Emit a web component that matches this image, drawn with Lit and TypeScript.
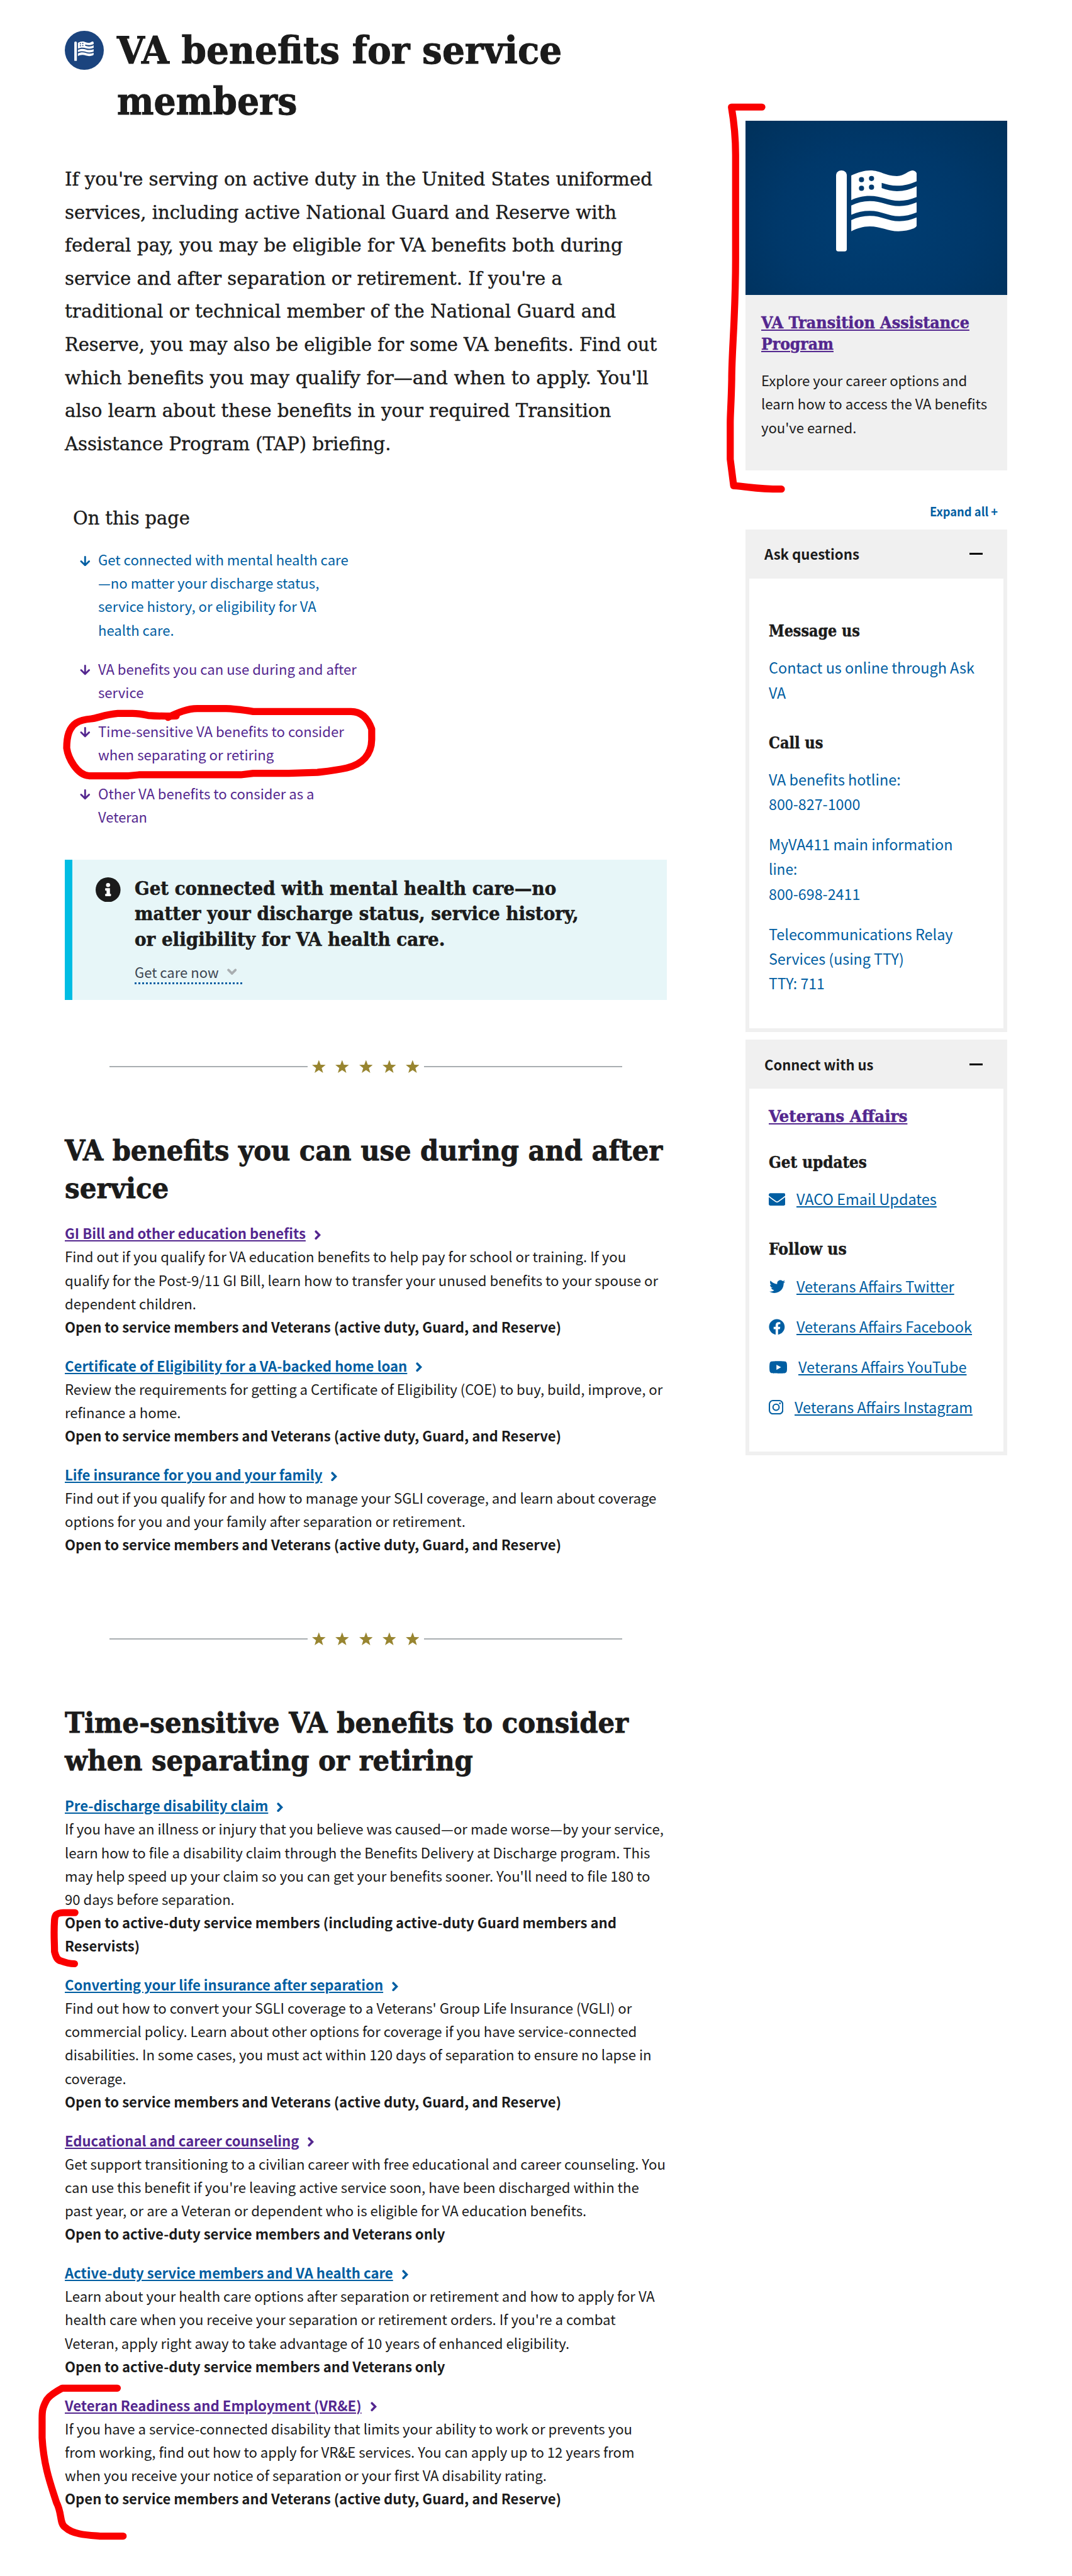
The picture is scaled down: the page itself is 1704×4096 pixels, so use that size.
import { LitElement, html, svg, unsafeCSS } from "lit";
import { customElement, property } from "lit/decorators.js";

/* Lengths are written in design units ("u") and scaled to the page width. */
const SCALE = 1704 / 1101;
const sheet = (source: string) =>
  unsafeCSS(source.replace(/(-?\d*\.?\d+)u\b/g, (_, n) => `${(parseFloat(n) * SCALE).toFixed(3)}px`));

type Line = [text: string, width: number];

/** One line of text set to an exact measure. */
@customElement("fit-line")
class FitLine extends LitElement {
  @property() text = "";
  @property({ type: Number }) measure = 0;

  static styles = sheet(`
    :host { display: block; white-space: nowrap; }
    .ink { display: inline-block; transform-origin: 0 50%; text-decoration: inherit; }
    :host(.link) .ink { text-decoration: underline; text-decoration-thickness: 1.4u; text-underline-offset: 1.3u; }
  `);

  updated() {
    const ink = this.renderRoot.querySelector(".ink") as HTMLElement;
    ink.style.transform = "none";
    const natural = ink.getBoundingClientRect().width;
    const target = this.measure * SCALE;
    this.style.width = `${target}px`;
    if (natural > 0) ink.style.transform = `scaleX(${target / natural})`;
  }

  render() {
    return html`<span class="ink">${this.text}</span>`;
  }
}

const lines = (items: Line[], cls = "") =>
  items.map(([t, w]) => html`<fit-line class=${cls} .text=${t} .measure=${w}></fit-line>`);

const flag = html`<svg class="flag" viewBox="0 0 166 167" fill="#fff">
  <path d="M0 10.5C0 4 5 0 11 0s11 4 11 10.500V162q0 4.500-4.500 4.500h-13Q0 166.500 0 162z" />
  <path fill-rule="evenodd" d="M31.200 10.500C45 4 58 0 70 0c22 0 30 11.500 55 11.500C141 11.500 148 0 157 0q9 1 9 10v12c-13 6-26 9.500-41 9.500-11 0-21-2.500-31.300-6v10.700c10.300 3.800 20.300 6.300 31.300 6.300 15 0 28-4 41-10.300v22.300c-12 5-24 8-36 8-24 0-36-10-61-10-14 0-26 3-37.800 8.500z
    M57.500 19a5.300 5.300 0 1 0-10.600 0 5.300 5.300 0 1 0 10.600 0zM78.100 16.600a5.300 5.300 0 1 0-10.600 0 5.300 5.300 0 1 0 10.600 0zM57.500 36.700a5.300 5.300 0 1 0-10.600 0 5.300 5.300 0 1 0 10.600 0zM78.100 34.400a5.300 5.300 0 1 0-10.600 0 5.300 5.300 0 1 0 10.600 0z" />
  <path d="M31.200 72C43 66 56 63 69 63c25 0 37 10.500 61 10.500 12 0 24-3 36-8V86c-12 5-24 8-36 8-24 0-36-11-61-11-13 0-26 2.500-37.800 8z" />
  <path d="M31.200 102C43 96.500 56 93.500 69 93.500c25 0 37 11 61 11 12 0 24-3 36-8V111q0 5-6 8c-10 4-20 6-32 6-22 0-36-10-59-10-14 0-26 4-37.800 10z" />
</svg>`;

const arrow = html`<svg class="arrow" viewBox="0 0 11 11" fill="none" stroke="currentColor" stroke-width="1.900" stroke-linecap="round" stroke-linejoin="round"><path d="M5.500 1v8.700M1.300 5.600l4.200 4.200 4.200-4.200" /></svg>`;
const chevron = html`<svg class="chevron" viewBox="0 0 13 20" fill="none" stroke="currentColor" stroke-width="4.600" stroke-linecap="round" stroke-linejoin="miter"><path d="M2.800 2.800l7 7.200-7 7.200" /></svg>`;

const icons: Record<string, unknown> = {
  email: html`<svg class="i-email" viewBox="0 0 512 384"><path fill="currentColor" d="M502.300 126.800c3.900-3.100 9.700-.200 9.700 4.700V336c0 26.500-21.500 48-48 48H48c-26.500 0-48-21.500-48-48V131.600c0-5 5.700-7.800 9.700-4.700 22.400 17.400 52.100 39.500 154.100 113.600 21.100 15.400 56.700 47.800 92.200 47.600 35.700.300 72-32.800 92.300-47.600 102-74.100 131.600-96.300 154-113.700zM256 256c23.200.400 56.600-29.200 73.400-41.400 132.700-96.300 142.800-104.700 173.400-128.700 5.800-4.500 9.200-11.500 9.200-18.900V48c0-26.500-21.500-48-48-48H48C21.500 0 0 21.500 0 48v19c0 7.400 3.400 14.300 9.200 18.900 30.600 23.900 40.700 32.400 173.400 128.700 16.800 12.200 50.200 41.800 73.400 41.400z" /></svg>`,
  twitter: html`<svg class="i-twitter" viewBox="0 48 512 416"><path fill="currentColor" d="M459.370 151.716c.325 4.548.325 9.097.325 13.645 0 138.720-105.583 298.558-298.558 298.558-59.452 0-114.680-17.219-161.137-47.106 8.447.974 16.568 1.299 25.340 1.299 49.055 0 94.213-16.568 130.274-44.832-46.132-.975-84.792-31.188-98.112-72.772 6.498.974 12.995 1.624 19.818 1.624 9.421 0 18.843-1.300 27.614-3.573-48.081-9.747-84.143-51.980-84.143-102.985v-1.299c13.969 7.797 30.214 12.670 47.431 13.319-28.264-18.843-46.781-51.005-46.781-87.391 0-19.492 5.197-37.360 14.294-52.954 51.655 63.675 129.300 105.258 216.365 109.807-1.624-7.797-2.599-15.918-2.599-24.040 0-57.828 46.782-104.934 104.934-104.934 30.213 0 57.502 12.670 76.670 33.137 23.715-4.548 46.456-13.320 66.599-25.340-7.798 24.366-24.366 44.833-46.132 57.827 21.117-2.273 41.584-8.122 60.426-16.243-14.292 20.791-32.161 39.308-52.628 54.253z" /></svg>`,
  facebook: html`<svg class="i-facebook" viewBox="0 0 512 512"><path fill="currentColor" d="M504 256C504 119 393 8 256 8S8 119 8 256c0 123.780 90.690 226.380 209.250 245V327.690h-63V256h63v-54.640c0-62.150 37-96.480 93.670-96.480 27.140 0 55.520 4.840 55.520 4.840v61h-31.280c-30.800 0-40.410 19.120-40.410 38.730V256h68.780l-11 71.690h-57.780V501C413.310 482.380 504 379.780 504 256z" /></svg>`,
  youtube: html`<svg class="i-youtube" viewBox="14 64 548 384"><path fill="currentColor" d="M549.655 124.083c-6.281-23.650-24.787-42.276-48.284-48.597C458.781 64 288 64 288 64S117.220 64 74.629 75.486c-23.497 6.322-42.003 24.947-48.284 48.597-11.412 42.867-11.412 132.305-11.412 132.305s0 89.438 11.412 132.305c6.281 23.650 24.787 41.500 48.284 47.821C117.220 448 288 448 288 448s170.780 0 213.371-11.486c23.497-6.321 42.003-24.171 48.284-47.821 11.412-42.867 11.412-132.305 11.412-132.305s0-89.438-11.412-132.305zm-317.510 213.508V175.185l142.739 81.205-142.739 81.201z" /></svg>`,
  instagram: html`<svg class="i-instagram" viewBox="0 0 30 30" fill="none" stroke="currentColor"><rect x="1.350" y="1.350" width="27.300" height="27.300" rx="7.200" stroke-width="2.700" /><circle cx="15" cy="15" r="6.300" stroke-width="2.700" /><circle cx="23" cy="7" r="1.800" fill="currentColor" stroke="none" /></svg>`,
};

const intro: Line[] = [
  ["If you're serving on active duty in the United States uniformed", 603.5],
  ["services, including active National Guard and Reserve with", 566.6],
  ["federal pay, you may be eligible for VA benefits both during", 573],
  ["service and after separation or retirement. If you're a", 511],
  ["traditional or technical member of the National Guard and", 566],
  ["Reserve, you may also be eligible for some VA benefits. Find out", 608],
  ["which benefits you may qualify for—and when to apply. You'll", 599.5],
  ["also learn about these benefits in your required Transition", 561],
  ["Assistance Program (TAP) briefing.", 335],
];

const contents: { visited: boolean; lines: Line[] }[] = [
  {
    visited: false,
    lines: [
      ["Get connected with mental health care", 257],
      ["—no matter your discharge status,", 227],
      ["service history, or eligibility for VA", 224],
      ["health care.", 78],
    ],
  },
  { visited: true, lines: [["VA benefits you can use during and after", 265.5], ["service", 46.8]] },
  { visited: true, lines: [["Time-sensitive VA benefits to consider", 252.5], ["when separating or retiring", 180.5]] },
  { visited: true, lines: [["Other VA benefits to consider as a", 222], ["Veteran", 50.4]] },
];

interface Benefit {
  title: Line;
  visited?: boolean;
  text: Line[];
  open: Line[];
}

const everyone: Line[] = [["Open to service members and Veterans (active duty, Guard, and Reserve)", 509.8]];
const activeOnly: Line[] = [["Open to active-duty service members and Veterans only", 390.6]];

const general: Benefit[] = [
  {
    title: ["GI Bill and other education benefits", 247.4],
    visited: true,
    text: [
      ["Find out if you qualify for VA education benefits to help pay for school or training. If you", 576.4],
      ["qualify for the Post-9/11 GI Bill, learn how to transfer your unused benefits to your spouse or", 609.3],
      ["dependent children.", 135],
    ],
    open: everyone,
  },
  {
    title: ["Certificate of Eligibility for a VA-backed home loan", 351.7],
    text: [
      ["Review the requirements for getting a Certificate of Eligibility (COE) to buy, build, improve, or", 614],
      ["refinance a home.", 119.2],
    ],
    open: everyone,
  },
  {
    title: ["Life insurance for you and your family", 264.5],
    text: [
      ["Find out if you qualify for and how to manage your SGLI coverage, and learn about coverage", 607.6],
      ["options for you and your family after separation or retirement.", 411.5],
    ],
    open: everyone,
  },
];

const timed: Benefit[] = [
  {
    title: ["Pre-discharge disability claim", 208.9],
    text: [
      ["If you have an illness or injury that you believe was caused—or made worse—by your service,", 615],
      ["learn how to file a disability claim through the Benefits Delivery at Discharge program. This", 601.2],
      ["may help speed up your claim so you can get your benefits sooner. You'll need to file 180 to", 601.2],
      ["90 days before separation.", 174.3],
    ],
    open: [
      ["Open to active-duty service members (including active-duty Guard members and", 566.6],
      ["Reservists)", 76.9],
    ],
  },
  {
    title: ["Converting your life insurance after separation", 327],
    text: [
      ["Find out how to convert your SGLI coverage to a Veterans' Group Life Insurance (VGLI) or", 582.4],
      ["commercial policy. Learn about other options for coverage if you have service-connected", 587.5],
      ["disabilities. In some cases, you must act within 120 days of separation to ensure no lapse in", 602.5],
      ["coverage.", 63],
    ],
    open: everyone,
  },
  {
    title: ["Educational and career counseling", 240.6],
    visited: true,
    text: [
      ["Get support transitioning to a civilian career with free educational and career counseling. You", 617],
      ["can use this benefit if you're leaving active service soon, have been discharged within the", 589.7],
      ["past year, or are a Veteran or dependent who is eligible for VA education benefits.", 535.8],
    ],
    open: activeOnly,
  },
  {
    title: ["Active-duty service members and VA health care", 337.1],
    text: [
      ["Learn about your health care options after separation or retirement and how to apply for VA", 605.9],
      ["health care when you receive your separation or retirement orders. If you're a combat", 565.7],
      ["Veteran, apply right away to take advantage of 10 years of enhanced eligibility.", 518.3],
    ],
    open: activeOnly,
  },
  {
    title: ["Veteran Readiness and Employment (VR&E)", 304.7],
    visited: true,
    text: [
      ["If you have a service-connected disability that limits your ability to work or prevents you", 582.8],
      ["from working, find out how to apply for VR&E services. You can apply up to 12 years from", 585],
      ["when you receive your notice of separation or your first VA disability rating.", 494.8],
    ],
    open: everyone,
  },
];

const calls: Line[][] = [
  [["VA benefits hotline:", 135.5], ["800-827-1000", 93.9]],
  [["MyVA411 main information", 189], ["line:", 29.2], ["800-698-2411", 93.9]],
  [["Telecommunications Relay", 189], ["Services (using TTY)", 138.8], ["TTY: 711", 57.4]],
];

const social: [icon: string, text: string, width: number][] = [
  ["twitter", "Veterans Affairs Twitter", 162],
  ["facebook", "Veterans Affairs Facebook", 180.3],
  ["youtube", "Veterans Affairs YouTube", 172.8],
  ["instagram", "Veterans Affairs Instagram", 182.8],
];

const strokes = [
  "M362 1471Q330 1472 304 1470Q285 1466 272 1466H242C215 1468 200 1476 187 1477C160 1479 148 1488 141.500 1505C137 1518 137 1530 137 1537C140 1558 158 1592 182.500 1594H264L285 1592H494.500L520 1589H593L652 1587Q690 1583 712 1578C745 1570 763 1550 763.500 1520V1498C757 1480 745 1462 721 1462H520Q480 1456 464 1456H405C385 1456 366 1464 345 1474",
  "M1565 220H1502.500C1509 258 1511 290 1511 318V533.500C1511 650 1503 720 1503 780C1502 830 1500 850 1500 869V943.500L1507 998C1540 1000 1550 1005 1605 1005",
  "M154 3930H130C115 3931 113 3935 112 3945C110 3975 112 3990 112 4010C115 4022 118 4028 125 4029Q140 4035 153 4035",
  "M241 4907H128Q100 4922 95 4933C87 4948 86.500 4955 86.500 4970V5009C90 5070 106 5110 116 5142C128 5165 122 5186 134 5193C150 5208 180 5209 205 5211H253",
];

@customElement("app-root")
class AppRoot extends LitElement {
  static styles = sheet(`
    :host {
      display: block; position: relative; width: 1704px; height: 4096px; overflow: hidden;
      background: #fff; color: #1b1b1b;
      font-family: "Noto Sans CJK SC", "Open Sans", sans-serif;
      font-size: 14.32u; line-height: 24u;
    }
    * { box-sizing: border-box; }
    h1, h2, h3, h4, p, ul { margin: 0; padding: 0; font-size: inherit; font-weight: inherit; list-style: none; }
    .serif { font-family: "DejaVu Serif Condensed", "DejaVu Serif", serif; -webkit-text-stroke: .25u currentColor; }
    .bold { font-weight: 700; }
    .blue { color: #005ea2; }
    .visited { color: #54278f; }
    svg { display: block; flex: none; }
    .page { display: flex; gap: 80.7u; padding: 0 0 0 66.5u; align-items: flex-start; }
    .main { width: 618.3u; padding-top: 26.1u; }
    .side { width: 269u; padding-top: 123.9u; }

    .title { display: flex; gap: 13.8u; }
    .badge { width: 40u; height: 40u; margin-top: 5.4u; border-radius: 50%; background: #1b447e; display: flex; align-items: center; justify-content: center; }
    .badge .flag { width: 20u; height: 20u; margin-top: 2u; }
    .title h1 { font-size: 38.8u; line-height: 52u; font-weight: 700; -webkit-text-stroke-width: .6u; }
    .intro { margin-top: 37.2u; font-size: 19.4u; line-height: 34u; }
    .otp { margin: 46u 0 0 8.500u; font-size: 19.4u; line-height: 26u; }
    .toc { margin-top: 17.6u; padding-left: 15.8u; display: flex; flex-direction: column; gap: 16u; }
    .toc li { display: flex; gap: 8.1u; }
    .arrow { width: 10.7u; height: 10.7u; margin-top: 8.1u; }

    .alert { display: flex; gap: 14.5u; margin-top: 32.46u; height: 144u; padding: 16.9u 0 0 24u; border-left: 8u solid #00bde3; background: #e7f6f8; }
    .info { width: 25.6u; height: 25.6u; margin: 1u .2u 0 0; }
    .alert h2 { font-size: 19.4u; line-height: 26u; font-weight: 700; -webkit-text-stroke-width: .35u; }
    .care { display: flex; align-items: flex-start; gap: 8.2u; width: 110u; margin-top: 8.2u; height: 24.6u; color: #3d4551; border-bottom: 2u dotted #005ea2; }
    .caret { width: 10u; height: 7u; margin-top: 8.4u; }

    .rule { display: flex; align-items: center; justify-content: center; gap: 5u; height: 14u; }
    .rule i { width: 203.5u; height: 2px; background: #a9aeb1; }
    .stars { display: flex; gap: 10u; }
    .stars svg { width: 14u; height: 14u; }
    .rule.first { margin-top: 61.35u; }
    .rule.second { margin-top: 77.8u; }
    .section { margin-top: 60.4u; font-size: 29.1u; line-height: 39u; font-weight: 700; -webkit-text-stroke-width: .5u; }
    .benefits { margin-top: 13.9u; display: flex; flex-direction: column; gap: 16u; }
    .name { display: flex; align-items: flex-start; gap: 9.1u; font-weight: 700; }
    .chevron { width: 6.5u; height: 10u; margin-top: 8.8u; }

    .card { height: 359.4u; background: #f0f0f0; }
    .hero { height: 179.4u; display: flex; align-items: center; justify-content: center; background: radial-gradient(ellipse 75% 90% at 50% 60%, #003e73 0%, #00386a 50%, #003059 100%); }
    .hero .flag { width: 83u; height: 83.5u; margin-top: 7u; }
    .card .body { padding: 17u 0 0 16.1u; }
    .head { font-size: 16.5u; line-height: 22.1u; font-weight: 700; -webkit-text-stroke-width: .3u; }
    .card p { margin-top: 14.3u; }
    .expand { display: flex; justify-content: flex-end; padding-right: 9.9u; margin-top: 30.4u; height: 30.25u; font-size: 12.5u; font-weight: 700; line-height: 24u; }
    .bar { display: flex; align-items: center; justify-content: space-between; height: 50.5u; padding: 0 25u 0 19.7u; background: #f0f0f0; font-weight: 700; }
    .bar i { width: 14u; height: 2u; background: #000; }
    .panel { border: 4u solid #f0f0f0; border-top: 0; padding-left: 20.3u; font-size: 15.22u; line-height: 25.4u; }
    .ask { height: 465.7u; padding-top: 42.9u; }
    .ask .links { margin-top: 14u; display: flex; flex-direction: column; gap: 16u; }
    .ask .call { margin-top: 27.8u; }
    .bar.two { margin-top: 7.9u; height: 50.7u; }
    .connect { height: 376.1u; padding-top: 17u; }
    .updates { margin-top: 25u; }
    .follow { margin-top: 27.4u; }
    .row { display: flex; align-items: flex-start; }
    .email { margin-top: 14.35u; }
    .social { margin-top: 15u; display: flex; flex-direction: column; gap: 16u; }
    .i-email { width: 17u; height: 13u; margin: 6.4u 11.1u 0 0; }
    .i-twitter { width: 16.3u; height: 13.8u; margin: 5.6u 11.5u 0 .3u; }
    .i-facebook { width: 16.6u; height: 16.6u; margin: 4.4u 11.5u 0 0; }
    .i-youtube { width: 18.2u; height: 13u; margin: 6.3u 11.7u 0 .3u; }
    .i-instagram { width: 15u; height: 15u; margin: 4.7u 11.1u 0 0; }

    .markup { position: absolute; inset: 0; width: 100%; height: 100%; pointer-events: none; }
  `);

  private rule(cls: string) {
    return html`<div class="rule ${cls}"><i></i><div class="stars">
      ${[0, 1, 2, 3, 4].map(() => html`<svg viewBox="0 0 28 27"><path fill="#988530" d="M14 0l3.600 9.700 10.400.400-8.200 6.400 2.900 10L14 20.700 5.300 26.500l2.900-10L0 10.100l10.400-.400z" /></svg>`)}
    </div><i></i></div>`;
  }

  private benefits(items: Benefit[]) {
    return html`<ul class="benefits">${items.map(
      (b) => html`<li>
        <div class="name ${b.visited ? "visited" : "blue"}">${lines([b.title], "link")}${chevron}</div>
        <p>${lines(b.text)}</p>
        <p class="bold">${lines(b.open)}</p>
      </li>`
    )}</ul>`;
  }

  render() {
    return html`
      <div class="page">
        <div class="main">
          <div class="title">
            <span class="badge">${flag}</span>
            <h1 class="serif">${lines([["VA benefits for service", 457], ["members", 185]])}</h1>
          </div>
          <p class="intro serif">${lines(intro)}</p>
          <h2 class="otp serif">${lines([["On this page", 120]])}</h2>
          <ul class="toc">${contents.map(
            (c) => html`<li class=${c.visited ? "visited" : "blue"}>${arrow}<div>${lines(c.lines)}</div></li>`
          )}</ul>
          <div class="alert">
            <svg class="info" viewBox="0 0 51 51"><circle cx="25.500" cy="25.500" r="25.500" fill="#1b1b1b" /><circle cx="25.500" cy="15.700" r="4.200" fill="#fff" /><path fill="#fff" d="M20.500 22.300h8.800v11.500h1.200q1 0 1 1v2.700q0 1-1 1H20.500q-1 0-1-1v-2.700q0-1 1-1h1.900v-6.600h-1.900q-1 0-1-1v-2.900q0-1 1-1z" /></svg>
            <div>
              <h2 class="serif">${lines([
                ["Get connected with mental health care—no", 433],
                ["matter your discharge status, service history,", 456],
                ["or eligibility for VA health care.", 318.8],
              ])}</h2>
              <div class="care">${lines([["Get care now", 86.3]])}<svg class="caret" viewBox="0 0 20 14" fill="none" stroke="#a9aeb1" stroke-width="5" stroke-linecap="round"><path d="M2.800 3l7.200 7.200L17.200 3" /></svg></div>
            </div>
          </div>
          ${this.rule("first")}
          <h2 class="section serif">${lines([["VA benefits you can use during and after", 614], ["service", 106.8]])}</h2>
          ${this.benefits(general)}
          ${this.rule("second")}
          <h2 class="section serif">${lines([["Time-sensitive VA benefits to consider", 579], ["when separating or retiring", 419.2]])}</h2>
          ${this.benefits(timed)}
        </div>
        <div class="side">
          <div class="card">
            <div class="hero">${flag}</div>
            <div class="body">
              <h3 class="head serif visited">${lines([["VA Transition Assistance", 213.8], ["Program", 74.3]], "link")}</h3>
              <p>${lines([["Explore your career options and", 211.5], ["learn how to access the VA benefits", 232], ["you've earned.", 97.8]])}</p>
            </div>
          </div>
          <div class="expand blue">${lines([["Expand all +", 69.9]])}</div>
          <div class="bar">${lines([["Ask questions", 97.5]])}<i></i></div>
          <div class="panel ask">
            <h3 class="head serif">${lines([["Message us", 93.5]])}</h3>
            <div class="links blue"><p>${lines([["Contact us online through Ask", 211.2], ["VA", 17.5]])}</p></div>
            <h3 class="head serif call">${lines([["Call us", 55.8]])}</h3>
            <div class="links blue">${calls.map((c) => html`<p>${lines(c)}</p>`)}</div>
          </div>
          <div class="bar two">${lines([["Connect with us", 112]])}<i></i></div>
          <div class="panel connect">
            <h3 class="head serif visited">${lines([["Veterans Affairs", 142.4]], "link")}</h3>
            <h3 class="head serif updates">${lines([["Get updates", 100.7]])}</h3>
            <div class="row email blue">${icons.email}${lines([["VACO Email Updates", 144]], "link")}</div>
            <h3 class="head serif follow">${lines([["Follow us", 79.9]])}</h3>
            <div class="social blue">${social.map(
              ([icon, text, w]) => html`<div class="row">${icons[icon]}${lines([[text, w]], "link")}</div>`
            )}</div>
          </div>
        </div>
      </div>
      <svg class="markup" viewBox="0 0 2202 5293" preserveAspectRatio="none" fill="none" stroke="#fa0000" stroke-width="14.500" stroke-linecap="round" stroke-linejoin="round">
        ${strokes.map((d) => svg`<path d=${d} />`)}
      </svg>
    `;
  }
}
